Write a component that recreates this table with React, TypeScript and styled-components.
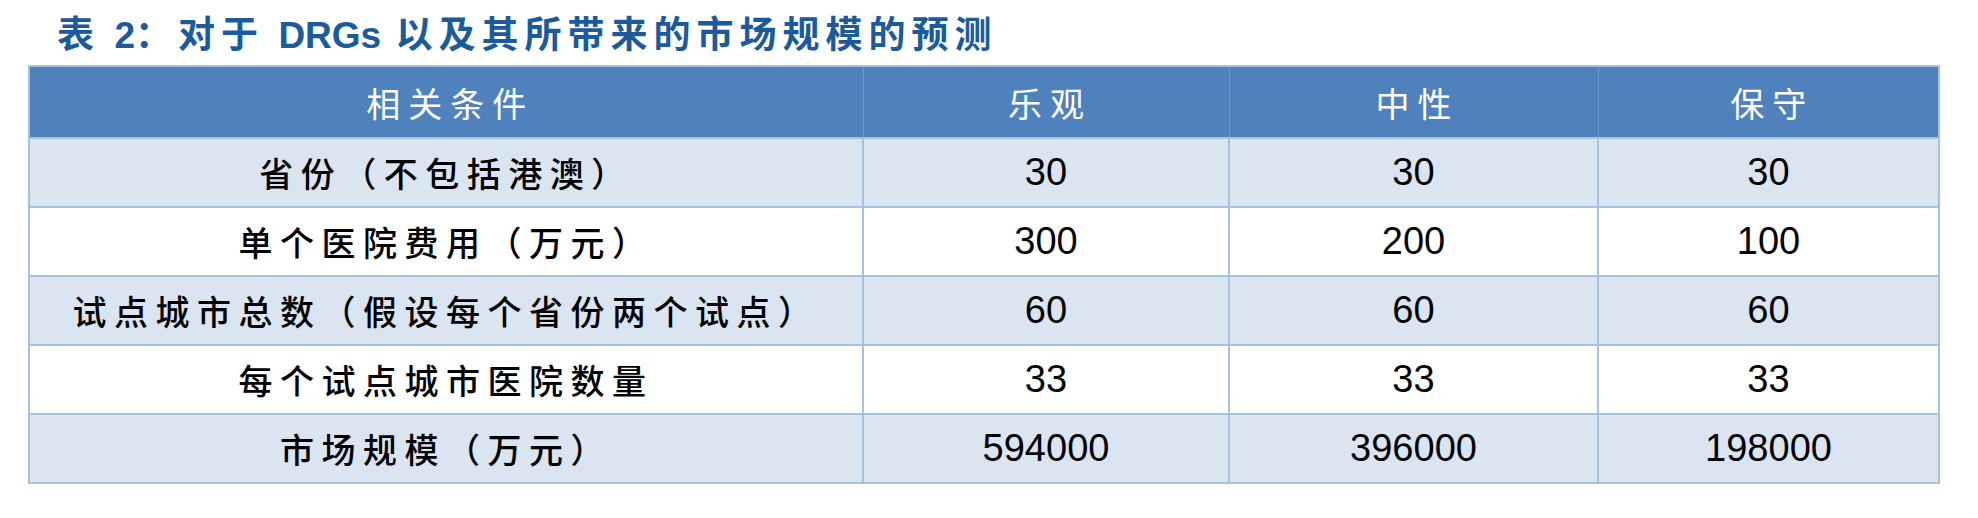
import React from 'react'
import { createGlobalStyle, styled } from 'styled-components'

type Row = {
  label: string
  values: string[]
}

const columns = ['乐观', '中性', '保守']

const rows: Row[] = [
  { label: '省份（不包括港澳）', values: ['30', '30', '30'] },
  { label: '单个医院费用（万元）', values: ['300', '200', '100'] },
  { label: '试点城市总数（假设每个省份两个试点）', values: ['60', '60', '60'] },
  { label: '每个试点城市医院数量', values: ['33', '33', '33'] },
  { label: '市场规模（万元）', values: ['594000', '396000', '198000'] },
]

const colWidths = [834, 366, 369, 341]

const GlobalStyle = createGlobalStyle`
  html, body {
    margin: 0;
    padding: 0;
    background: #ffffff;
  }
  body {
    font-family: 'Liberation Sans', 'Noto Sans CJK SC', sans-serif;
  }
`

const Page = styled.div`
  width: 1978px;
  height: 518px;
  padding-left: 28px;
  box-sizing: border-box;
`

const Title = styled.h1`
  margin: 0 0 10px 0;
  padding: 9px 0 0 29px;
  height: 46px;
  line-height: 46px;
  font-family: 'Noto Sans CJK SC', sans-serif;
  font-size: 37px;
  font-weight: 700;
  letter-spacing: 6px;
  color: #1b5a9b;
  white-space: nowrap;
`

const Latin = styled.span`
  font-family: 'Liberation Sans', Arial, sans-serif;
  font-weight: 700;
  letter-spacing: 0;
`

const Table = styled.table`
  width: 1910px;
  table-layout: fixed;
  border-collapse: collapse;
  border: 2px solid #a7c0de;
`

const HeadCell = styled.th`
  height: 70px;
  padding: 0 0 0 8px;
  background: #4f81bd;
  border-left: 1px solid #6f98c9;
  border-right: 1px solid #6f98c9;
  color: #ffffff;
  font-family: 'Noto Sans CJK SC', sans-serif;
  font-size: 34px;
  font-weight: 400;
  letter-spacing: 8px;
  text-align: center;
  vertical-align: middle;
`

const BodyRow = styled.tr<{ $shaded: boolean }>`
  background: ${p => (p.$shaded ? '#dbe5f1' : '#ffffff')};
`

const Cell = styled.td`
  height: 67px;
  padding: 0;
  border: 2px solid #a7c0de;
  text-align: center;
  vertical-align: middle;
  color: #000000;
`

const LabelText = styled.span`
  font-family: 'Noto Sans CJK SC', sans-serif;
  font-size: 34px;
  font-weight: 500;
  letter-spacing: 7.5px;
`

const NumberText = styled.span`
  font-family: 'Liberation Sans', Arial, sans-serif;
  font-size: 38px;
`

const App = () => (
  <Page>
    <GlobalStyle />
    <Title>
      表 <Latin>2</Latin>：对于 <Latin>DRGs</Latin> 以及其所带来的市场规模的预测
    </Title>
    <Table>
      <colgroup>
        {colWidths.map((w, i) => (
          <col key={i} style={{ width: w }} />
        ))}
      </colgroup>
      <thead>
        <tr>
          <HeadCell>相关条件</HeadCell>
          {columns.map(c => (
            <HeadCell key={c}>{c}</HeadCell>
          ))}
        </tr>
      </thead>
      <tbody>
        {rows.map((r, i) => (
          <BodyRow key={r.label} $shaded={i % 2 === 0}>
            <Cell>
              <LabelText>{r.label}</LabelText>
            </Cell>
            {r.values.map((v, j) => (
              <Cell key={j}>
                <NumberText>{v}</NumberText>
              </Cell>
            ))}
          </BodyRow>
        ))}
      </tbody>
    </Table>
  </Page>
)

export default App
